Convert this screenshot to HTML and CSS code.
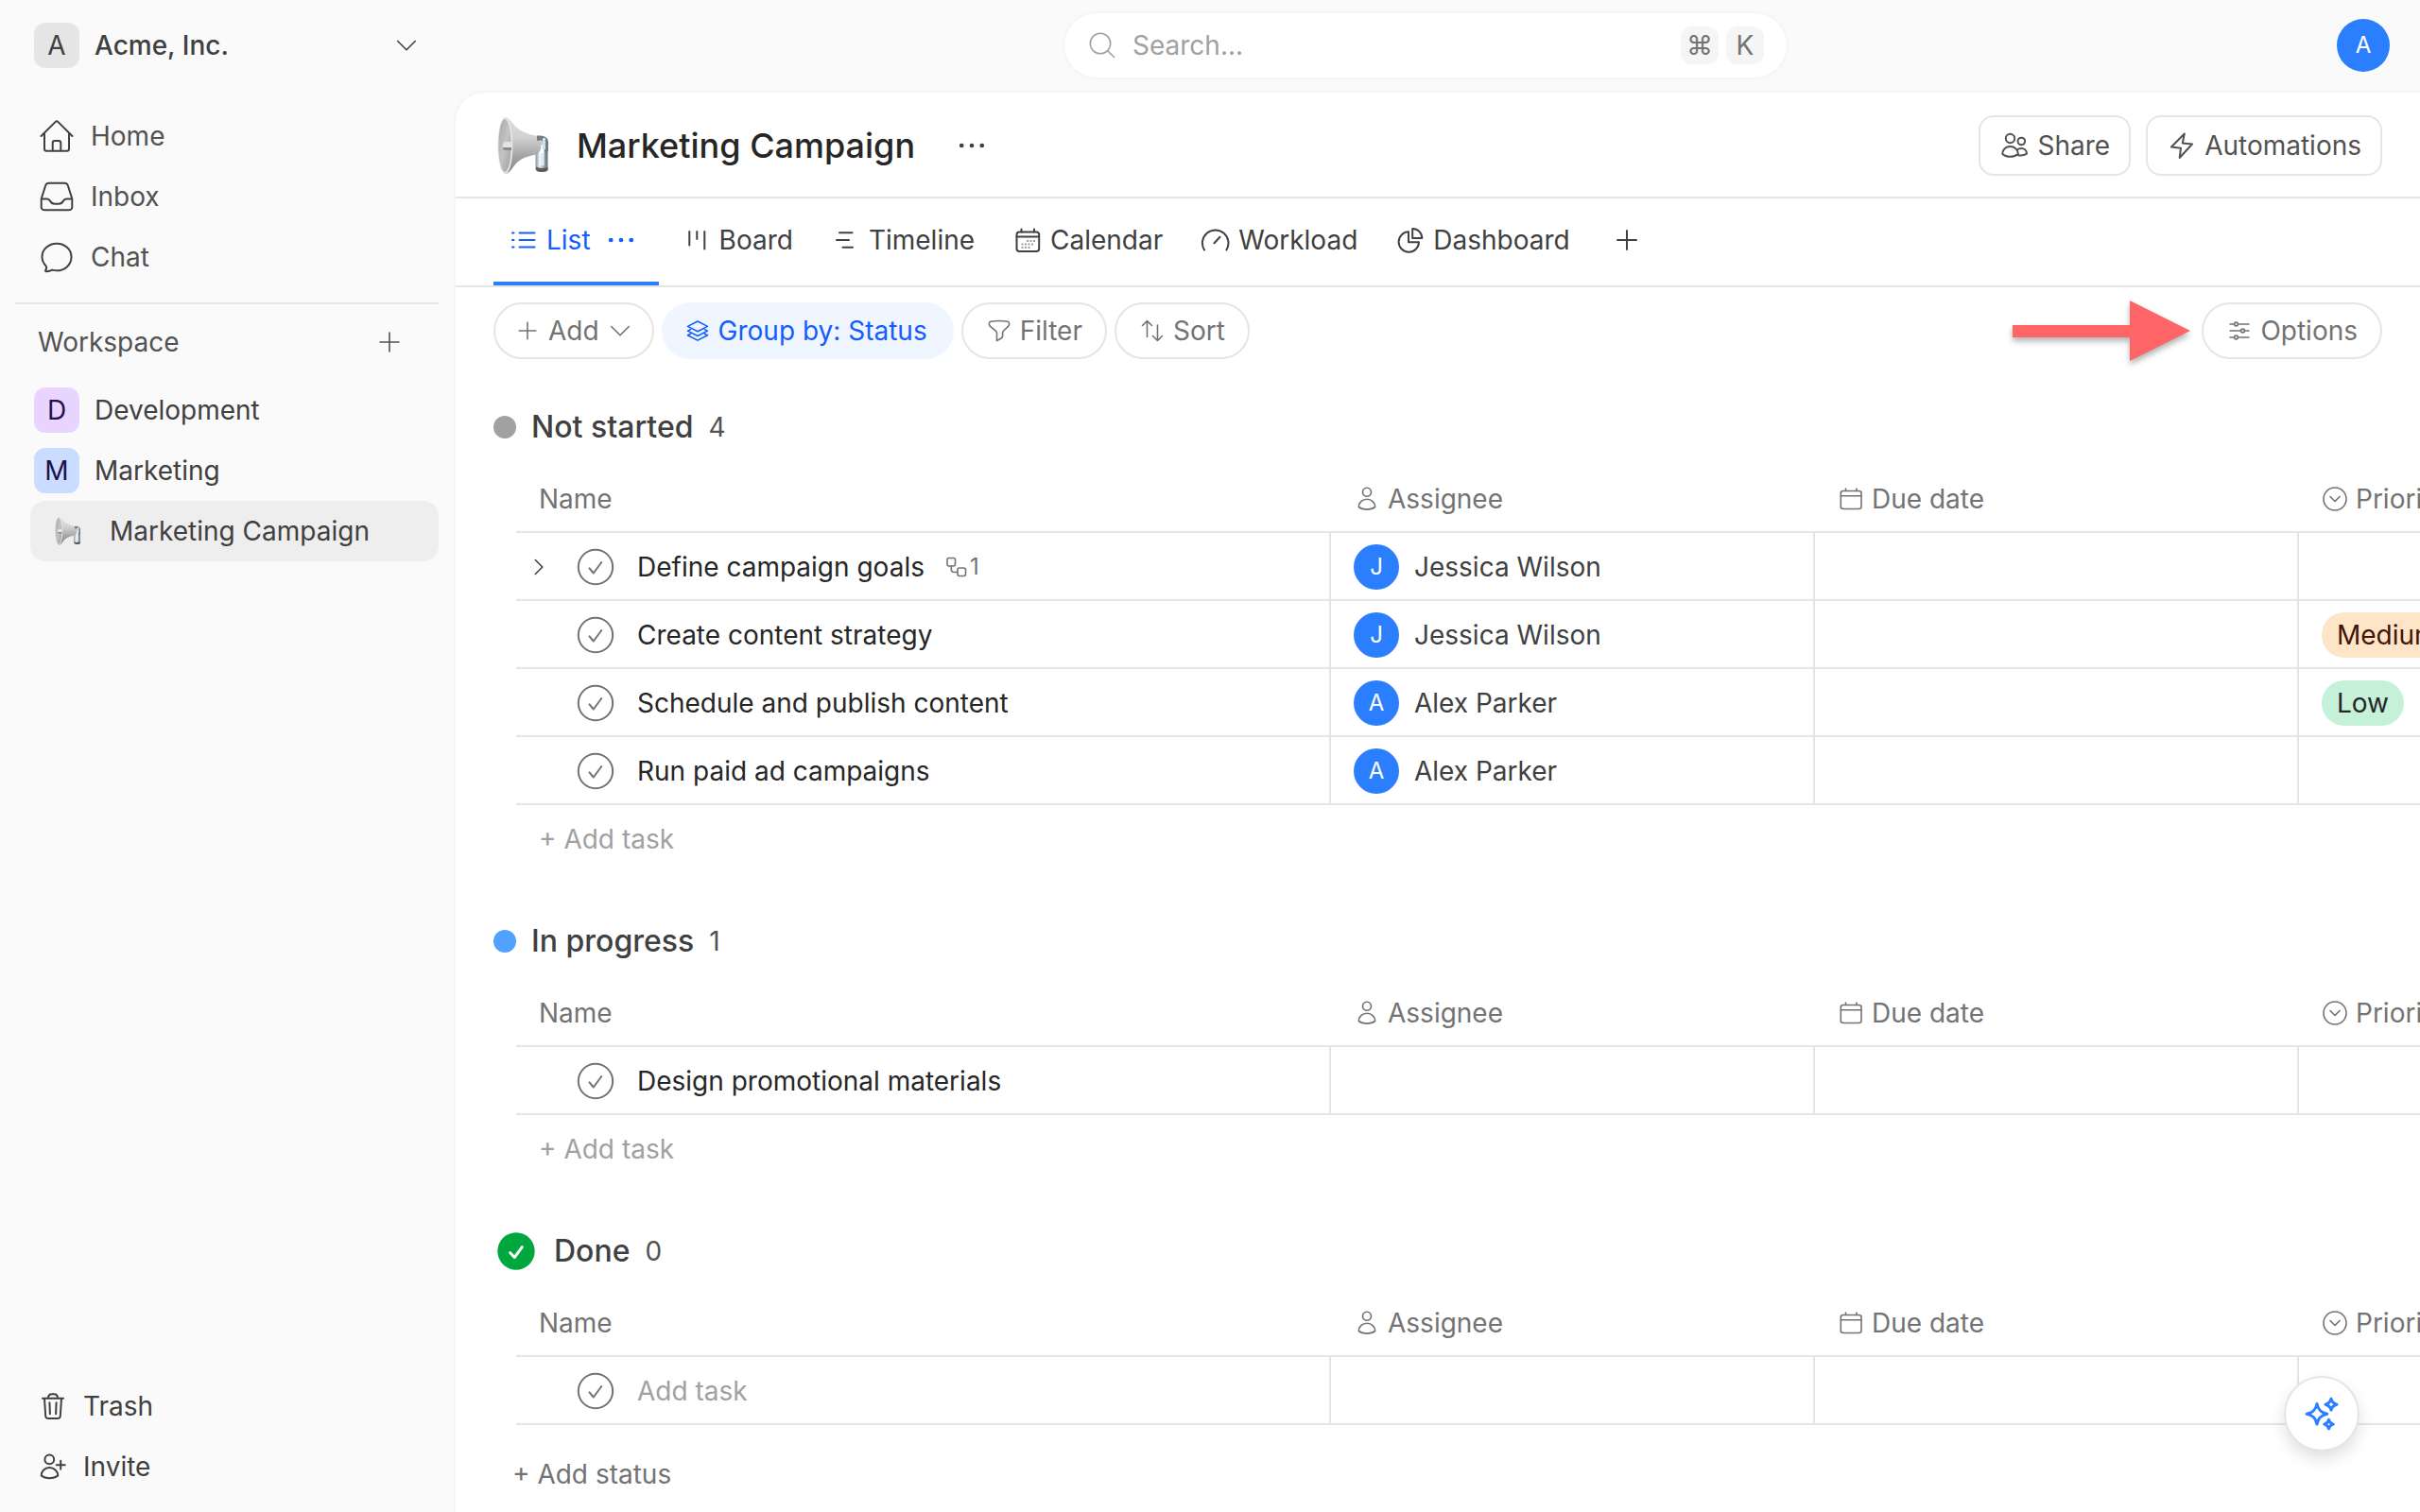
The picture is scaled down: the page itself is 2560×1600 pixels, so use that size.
FILE: index.html
```html
<!DOCTYPE html>
<html lang="en">
<head>
<meta charset="utf-8">
<meta name="viewport" content="width=device-width, initial-scale=1">
<title>Marketing Campaign – Acme, Inc.</title>
<link rel="stylesheet" href="styles.css">
</head>
<body>
<svg class="sprite" aria-hidden="true">
  <defs>
    <linearGradient id="horn" x1="0" y1="0" x2="0" y2="1">
      <stop offset="0" stop-color="#dcdcdc"/><stop offset=".35" stop-color="#d2d2d2"/><stop offset=".7" stop-color="#a2a2a2"/><stop offset="1" stop-color="#8a8a8a"/>
    </linearGradient>
    <linearGradient id="bell" x1="0" y1="0" x2="1" y2="1">
      <stop offset="0" stop-color="#a8a8a8"/><stop offset=".5" stop-color="#c4c4c4"/><stop offset="1" stop-color="#9d9d9d"/>
    </linearGradient>
    <linearGradient id="grip" x1="0" y1="0" x2="1" y2="0">
      <stop offset="0" stop-color="#8d9299"/><stop offset=".35" stop-color="#e8f1f8"/><stop offset=".6" stop-color="#9cb8c8"/><stop offset="1" stop-color="#6c6c6c"/>
    </linearGradient>
  </defs>
  <symbol id="i-megaphone" viewBox="0 0 64 64">
    <path d="M46 27h11.500v30c0 2-2 3-6.500 3s-6.500-1.500-6.500-3.500V40h4v13h5V31h-8z" fill="url(#grip)"/>
    <path d="M45 54.500c2 1.500 8 2 12.500.5v2.500c0 1.500-2.500 2.500-6.500 2.500s-6-1.300-6-3z" fill="#5c5c5c"/>
    <path d="M49.500 40h3.500v13.500h-3.500z" fill="#dcecf6"/>
    <path d="M12 2c4 0 7 5 11 9.500 6 6 14 8.500 22 10 4 .8 5.500 4 5.500 9.500s-2 9.500-6 10.500c-8 2-14 3-20.500 9.500C20 55.500 17 62 12 62z" fill="url(#horn)"/>
    <path d="M46 21.500c8-.5 12 2 12 7v9c0 1.500-2.500 1.500-4 .5V29c-2-3-5-3-8-2z" fill="#767b80"/>
    <path d="M52 24h3v12h-3z" fill="#c9e2f0"/>
    <ellipse cx="12.500" cy="32" rx="8" ry="30" fill="#e4e4e4"/>
    <ellipse cx="12" cy="32" rx="6.600" ry="28" fill="url(#bell)"/>
    <path d="M12 28h7v8h-7c-3-1-3-7 0-8z" fill="#e3e3e3"/>
    <path d="M12 34h7v3h-7c-1.500-.5-2-1.500-2-3z" fill="#8a8a8a"/>
  </symbol>
  <symbol id="i-home" viewBox="0 0 40 40"><path d="M3.500 20 18.700 4.900a1.800 1.800 0 0 1 2.600 0L36.500 20M7 17v16.500a2.200 2.200 0 0 0 2.200 2.200h21.600a2.200 2.200 0 0 0 2.200-2.200V17M15.700 35.500v-8.200a2.300 2.300 0 0 1 2.300-2.300h4a2.300 2.300 0 0 1 2.300 2.300v8.200"/></symbol>
  <symbol id="i-inbox" viewBox="0 0 40 40"><path d="M3.700 22.500 8 8.700a4 4 0 0 1 3.800-2.900h16.400A4 4 0 0 1 32 8.700l4.300 13.800V31a3.300 3.300 0 0 1-3.300 3.300H7A3.300 3.300 0 0 1 3.700 31zM3.700 22.500h6.100c1.600 0 2.600.8 3.300 2.200 1 2 2.700 3 4.900 3h4c2.200 0 3.900-1 4.900-3 .7-1.400 1.700-2.200 3.300-2.200h6.100"/></symbol>
  <symbol id="i-chat" viewBox="0 0 40 40"><path d="M20 5.700c8.700 0 15.500 6.300 15.500 14.300S28.700 34.300 20 34.300c-1.700 0-3.200-.2-4.700-.7-1.700 1-4 1.700-6.300 1.600-.9 0-1.200-.7-.7-1.400 1.100-1.600 1.100-3.300.2-4.600A13.700 13.700 0 0 1 4.500 20c0-8 6.800-14.300 15.500-14.300Z"/></symbol>
  <symbol id="i-trash" viewBox="0 0 32 32"><path d="M5 7.800h22M7 7.800l1.200 18.400a3 3 0 0 0 3 2.800h9.600a3 3 0 0 0 3-2.800L25 7.800M10.800 7.800c.3-2.700 1.800-4.600 4-4.600h2.400c2.200 0 3.700 1.900 4 4.600M12.400 12.300l.5 12M19.600 12.300l-.5 12"/></symbol>
  <symbol id="i-invite" viewBox="0 0 32 32"><circle cx="12.300" cy="8.300" r="4.900"/><path d="M3.700 25.500c0-4.600 3.800-8.500 8.600-8.500s9 3.900 9 8.500c-4.500 3.600-13.200 3.600-17.600 0ZM24.200 9.700v9M19.700 14.200h9"/></symbol>
  <symbol id="i-plus" viewBox="0 0 28 28"><path d="M14 4v20M4 14h20"/></symbol>
  <symbol id="i-plus-small" viewBox="0 0 28 28"><path d="M14 5.200v17.600M5.200 14h17.600"/></symbol>
  <symbol id="i-down" viewBox="0 0 28 28"><path d="m4.700 9.500 9.300 9.300 9.300-9.300"/></symbol>
  <symbol id="i-right" viewBox="0 0 28 28"><path d="m10.300 6.500 7.500 7.500-7.500 7.500"/></symbol>
  <symbol id="i-search" viewBox="0 0 32 32"><circle cx="14" cy="14" r="10.700"/><path d="m21.700 21.700 6.800 6.800"/></symbol>
  <symbol id="i-dots" viewBox="0 0 32 32"><g fill="currentColor" stroke="none"><circle cx="3.700" cy="16" r="2.700"/><circle cx="16" cy="16" r="2.700"/><circle cx="28.300" cy="16" r="2.700"/></g></symbol>
  <symbol id="i-share" viewBox="0 0 28 28"><circle cx="9.500" cy="6.500" r="4.700"/><circle cx="21.300" cy="9.500" r="3.800"/><path d="M1.200 22.700C1.200 18.300 5 15 9.500 15s8.400 3.300 8.400 7.700c-4.200 4.100-12.500 4.100-16.700 0ZM17.900 24.200c3 .5 6.400.2 9.100-1.500 0-3.600-2.600-5.800-5.700-5.800-2 0-3.400.6-4.400 1.700"/></symbol>
  <symbol id="i-bolt" viewBox="0 0 28 28"><path d="M16.800 1.500 3 15.500l10 1.300L11.700 27 25 12.500l-10.200-1z"/></symbol>
  <symbol id="i-list" viewBox="0 0 32 32"><path d="M11.500 8.500h16M11.500 16h16M11.500 23.500h16M4 8.500h1.500M4 16h1.500M4 23.500h1.500"/></symbol>
  <symbol id="i-board" viewBox="0 0 32 32"><path d="M8.300 7v14.500M16.300 7v8M24.300 7v18.500"/></symbol>
  <symbol id="i-timeline" viewBox="0 0 32 32"><path d="M9 8.300h13.500M6 16h13M12.500 23.700h10.500"/></symbol>
  <symbol id="i-calendar" viewBox="0 0 32 32"><rect x="4.500" y="7.500" width="23.700" height="20.500" rx="3"/><path d="M4.500 12.500h23.700M9.500 4.500v3M23 4.500v3"/><g opacity=".5" stroke-linecap="butt" stroke-dasharray="2 1.500"><path d="M15 17h9M9.500 20.500h13.500M9.500 24h10"/></g></symbol>
  <symbol id="i-gauge" viewBox="0 0 32 32"><path d="M4 26.500a13.800 13.800 0 1 1 23.400 0"/><path d="m14.500 19.300 6-6.500"/></symbol>
  <symbol id="i-pie" viewBox="0 0 32 32"><path d="M14 7.300A10.700 10.700 0 1 0 25 18.300H14Z"/><path d="M18.200 4A10 10 0 0 1 28.300 14H18.200Z"/></symbol>
  <symbol id="i-layers" viewBox="0 0 28 28"><path d="M14 4 24.500 9.400 14 14.800 3.500 9.400ZM6.500 12.600l-3 1.500L14 19.500l10.500-5.400-3-1.500M6.500 17.200l-3 1.500L14 24.100l10.500-5.400-3-1.500"/></symbol>
  <symbol id="i-filter" viewBox="0 0 28 28"><path d="M14 3.500c3.300 0 6.300.3 9 .7 1 .2 1.600 1 1.600 2V7c0 .8-.3 1.500-.9 2.100l-5.200 5.200a3 3 0 0 0-.9 2.100v3a3 3 0 0 1-1.500 2.600l-4.600 2.500v-8.100a3 3 0 0 0-.9-2.100L4.300 9.100A3 3 0 0 1 3.400 7v-.8c0-1 .6-1.800 1.600-2 2.700-.4 5.700-.7 9-.7Z"/></symbol>
  <symbol id="i-sort" viewBox="0 0 28 28"><path d="M8.500 20.500v-17M3.500 8.500l5-5 5 5M19.500 8v16.500M14.500 19.500l5 5 5-5"/></symbol>
  <symbol id="i-options" viewBox="0 0 28 28"><path d="M4 7h4.500M12.500 7H24M4 14h11.500M19.500 14H24M4 21h4.500M12.500 21H24"/><circle cx="10.500" cy="7" r="1.900"/><circle cx="17.500" cy="14" r="1.900"/><circle cx="10.500" cy="21" r="1.900"/></symbol>
  <symbol id="i-person" viewBox="0 0 28 28"><circle cx="14" cy="6.800" r="4.500"/><path d="M5.300 22.500c0-4.600 3.900-8.300 8.700-8.300s8.700 3.700 8.700 8.300c-4.400 3.500-13 3.500-17.400 0Z"/></symbol>
  <symbol id="i-date" viewBox="0 0 28 28"><rect x="3.300" y="5.500" width="21.700" height="19" rx="2.500"/><path d="M3.300 10.800H25M8.500 3v2.500M20 3v2.500"/></symbol>
  <symbol id="i-select" viewBox="0 0 28 28"><circle cx="14" cy="14" r="12"/><path d="m9 11.500 5 5 5-5"/></symbol>
  <symbol id="i-subtask" viewBox="0 0 28 28"><rect x="4" y="4.500" width="8.500" height="8.500" rx="2"/><rect x="15" y="15" width="8.500" height="8.500" rx="2"/><path d="M8.300 13v3.500a3 3 0 0 0 3 3H15"/></symbol>
  <symbol id="i-check" viewBox="0 0 40 40"><circle cx="20" cy="20" r="18.200"/><path d="m13.500 21.300 4.300 5.200 8.500-11.500"/></symbol>
  <symbol id="i-done" viewBox="0 0 48 48"><circle cx="24" cy="24" r="19.700" fill="#00a63e" stroke="none"/><path d="m17.700 25.700 4.600 4.800 8-10.800" fill="none" stroke="#fff" stroke-width="3"/></symbol>
  <symbol id="i-sparkles" viewBox="0 0 40 40"><path d="M15 9.500c1.300 6.600 4.200 9.500 10.800 10.800C19.200 21.600 16.300 24.500 15 31.100 13.700 24.500 10.800 21.600 4.200 20.300 10.800 19 13.700 16.100 15 9.500ZM30 4.200c.8 3.500 2.500 5.200 6 6-3.500.8-5.200 2.500-6 6-.8-3.500-2.500-5.200-6-6 3.500-.8 5.200-2.500 6-6ZM27.500 26.300c.6 2.800 2 4.200 4.800 4.800-2.800.6-4.200 2-4.800 4.800-.6-2.800-2-4.200-4.800-4.800 2.800-.6 4.200-2 4.800-4.800Z"/></symbol>
</svg>

<div class="app">
  <aside class="sidebar">
    <button class="org" type="button">
      <span class="badge badge-org">A</span>
      <span class="org-name">Acme, Inc.</span>
      <svg class="icon icon-28 thin"><use href="#i-down"/></svg>
    </button>
    <nav class="nav" aria-label="Main">
      <a class="nav-link" href="#home"><svg class="icon icon-40"><use href="#i-home"/></svg>Home</a>
      <a class="nav-link" href="#inbox"><svg class="icon icon-40"><use href="#i-inbox"/></svg>Inbox</a>
      <a class="nav-link" href="#chat"><svg class="icon icon-40"><use href="#i-chat"/></svg>Chat</a>
    </nav>
    <div class="workspace-head">
      <span>Workspace</span>
      <button class="icon-button" type="button" aria-label="Add to workspace"><svg class="icon icon-28 thin"><use href="#i-plus"/></svg></button>
    </div>
    <nav class="spaces" aria-label="Workspace">
      <a class="space" href="#development"><span class="badge badge-purple">D</span>Development</a>
      <a class="space" href="#marketing"><span class="badge badge-blue">M</span>Marketing</a>
      <a class="project" href="#campaign" aria-current="page"><svg class="icon-32"><use href="#i-megaphone"/></svg>Marketing Campaign</a>
    </nav>
    <nav class="sidebar-foot" aria-label="Tools">
      <a class="nav-link dark" href="#trash"><svg class="icon icon-32"><use href="#i-trash"/></svg>Trash</a>
      <a class="nav-link dark" href="#invite"><svg class="icon icon-32"><use href="#i-invite"/></svg>Invite</a>
    </nav>
  </aside>

  <div class="content">
    <header class="topbar">
      <div class="search-slot">
        <label class="search">
          <svg class="icon icon-32 thin"><use href="#i-search"/></svg>
          <input class="search-input" type="search" placeholder="Search..." aria-label="Search">
          <span class="keys"><kbd>⌘</kbd><kbd>K</kbd></span>
        </label>
      </div>
      <button class="account" type="button" aria-label="Account">A</button>
    </header>

    <main class="panel">
      <div class="project-head">
        <svg class="icon-64"><use href="#i-megaphone"/></svg>
        <h1>Marketing Campaign</h1>
        <button class="icon-button more" type="button" aria-label="More"><svg class="icon icon-28"><use href="#i-dots"/></svg></button>
        <div class="head-actions">
          <button class="action" type="button"><svg class="icon icon-28"><use href="#i-share"/></svg>Share</button>
          <button class="action" type="button"><svg class="icon icon-28"><use href="#i-bolt"/></svg>Automations</button>
        </div>
      </div>

      <nav class="tabs" aria-label="Views">
        <a class="tab active" href="#list" aria-current="page"><svg class="icon icon-32"><use href="#i-list"/></svg>List<span class="tab-more"><svg class="icon icon-28"><use href="#i-dots"/></svg></span></a>
        <a class="tab" href="#board"><svg class="icon icon-32"><use href="#i-board"/></svg>Board</a>
        <a class="tab" href="#timeline"><svg class="icon icon-32"><use href="#i-timeline"/></svg>Timeline</a>
        <a class="tab" href="#calendar"><svg class="icon icon-32"><use href="#i-calendar"/></svg>Calendar</a>
        <a class="tab" href="#workload"><svg class="icon icon-32"><use href="#i-gauge"/></svg>Workload</a>
        <a class="tab" href="#dashboard"><svg class="icon icon-32"><use href="#i-pie"/></svg>Dashboard</a>
        <button class="tab tab-add" type="button" aria-label="Add view"><svg class="icon icon-28"><use href="#i-plus"/></svg></button>
      </nav>

      <div class="toolbar">
        <button class="pill pill-add" type="button"><svg class="icon icon-28 thin"><use href="#i-plus-small"/></svg>Add<svg class="icon icon-28 thin"><use href="#i-down"/></svg></button>
        <button class="pill pill-on" type="button"><svg class="icon icon-28 thin"><use href="#i-layers"/></svg>Group by: Status</button>
        <button class="pill" type="button"><svg class="icon icon-28 thin"><use href="#i-filter"/></svg>Filter</button>
        <button class="pill" type="button"><svg class="icon icon-28 thin"><use href="#i-sort"/></svg>Sort</button>
        <svg class="pointer" viewBox="0 0 188 64" aria-hidden="true"><path d="M0 26h124V0l64 32-64 32V39H0z" fill="#ff6467"/></svg>
        <button class="pill" type="button"><svg class="icon icon-28 thin"><use href="#i-options"/></svg>Options</button>
      </div>

      <div class="groups">
        <section class="group">
          <h2 class="group-title"><span class="dot dot-gray"></span>Not started<span class="count">4</span></h2>
          <table class="tasks">
            <colgroup><col class="col-name"><col class="col"><col class="col"><col class="col"></colgroup>
            <thead>
              <tr>
                <th scope="col">Name</th>
                <th scope="col"><span class="th"><svg class="icon icon-28 thin"><use href="#i-person"/></svg>Assignee</span></th>
                <th scope="col"><span class="th"><svg class="icon icon-28 thin"><use href="#i-date"/></svg>Due date</span></th>
                <th scope="col"><span class="th"><svg class="icon icon-28 thin"><use href="#i-select"/></svg>Priority</span></th>
              </tr>
            </thead>
            <tbody>
              <tr>
                <td class="name-cell"><div class="task"><button class="expand" type="button" aria-label="Expand"><svg class="icon icon-28 thin"><use href="#i-right"/></svg></button><button class="check" type="button" aria-label="Complete"><svg class="icon icon-40 check-icon"><use href="#i-check"/></svg></button><span>Define campaign goals</span><span class="subtasks"><svg class="icon icon-28 thin"><use href="#i-subtask"/></svg>1</span></div></td>
                <td><div class="person"><span class="avatar">J</span>Jessica Wilson</div></td><td></td><td></td>
              </tr>
              <tr>
                <td class="name-cell"><div class="task"><span class="expand"></span><button class="check" type="button" aria-label="Complete"><svg class="icon icon-40 check-icon"><use href="#i-check"/></svg></button><span>Create content strategy</span></div></td>
                <td><div class="person"><span class="avatar">J</span>Jessica Wilson</div></td><td></td><td><span class="tag tag-medium">Medium</span></td>
              </tr>
              <tr>
                <td class="name-cell"><div class="task"><span class="expand"></span><button class="check" type="button" aria-label="Complete"><svg class="icon icon-40 check-icon"><use href="#i-check"/></svg></button><span>Schedule and publish content</span></div></td>
                <td><div class="person"><span class="avatar">A</span>Alex Parker</div></td><td></td><td><span class="tag tag-low">Low</span></td>
              </tr>
              <tr>
                <td class="name-cell"><div class="task"><span class="expand"></span><button class="check" type="button" aria-label="Complete"><svg class="icon icon-40 check-icon"><use href="#i-check"/></svg></button><span>Run paid ad campaigns</span></div></td>
                <td><div class="person"><span class="avatar">A</span>Alex Parker</div></td><td></td><td></td>
              </tr>
            </tbody>
          </table>
          <button class="add-task" type="button">+ Add task</button>
        </section>

        <section class="group">
          <h2 class="group-title"><span class="dot dot-blue"></span>In progress<span class="count">1</span></h2>
          <table class="tasks">
            <colgroup><col class="col-name"><col class="col"><col class="col"><col class="col"></colgroup>
            <thead>
              <tr>
                <th scope="col">Name</th>
                <th scope="col"><span class="th"><svg class="icon icon-28 thin"><use href="#i-person"/></svg>Assignee</span></th>
                <th scope="col"><span class="th"><svg class="icon icon-28 thin"><use href="#i-date"/></svg>Due date</span></th>
                <th scope="col"><span class="th"><svg class="icon icon-28 thin"><use href="#i-select"/></svg>Priority</span></th>
              </tr>
            </thead>
            <tbody>
              <tr>
                <td class="name-cell"><div class="task"><span class="expand"></span><button class="check" type="button" aria-label="Complete"><svg class="icon icon-40 check-icon"><use href="#i-check"/></svg></button><span>Design promotional materials</span></div></td>
                <td></td><td></td><td></td>
              </tr>
            </tbody>
          </table>
          <button class="add-task" type="button">+ Add task</button>
        </section>

        <section class="group">
          <h2 class="group-title"><svg class="icon icon-48"><use href="#i-done"/></svg>Done<span class="count">0</span></h2>
          <table class="tasks">
            <colgroup><col class="col-name"><col class="col"><col class="col"><col class="col"></colgroup>
            <thead>
              <tr>
                <th scope="col">Name</th>
                <th scope="col"><span class="th"><svg class="icon icon-28 thin"><use href="#i-person"/></svg>Assignee</span></th>
                <th scope="col"><span class="th"><svg class="icon icon-28 thin"><use href="#i-date"/></svg>Due date</span></th>
                <th scope="col"><span class="th"><svg class="icon icon-28 thin"><use href="#i-select"/></svg>Priority</span></th>
              </tr>
            </thead>
            <tbody>
              <tr>
                <td class="name-cell"><div class="task"><span class="expand"></span><button class="check" type="button" aria-label="Complete"><svg class="icon icon-40 check-icon"><use href="#i-check"/></svg></button><input class="task-input" type="text" placeholder="Add task" aria-label="Add task"></div></td>
                <td></td><td></td><td></td>
              </tr>
            </tbody>
          </table>
        </section>
        <button class="add-status" type="button">+ Add status</button>
      </div>
    </main>
  </div>
</div>
<button class="assistant" type="button" aria-label="Assistant"><svg class="icon icon-40"><use href="#i-sparkles"/></svg></button>
</body>
</html>
```
FILE: styles.css
```css
* { box-sizing: border-box; }

body {
  margin: 0;
  background: #fafafa;
  color: #404040;
  font-family: Inter, "Liberation Sans", sans-serif;
  font-size: 28px;
  line-height: 40px;
}

a { color: inherit; text-decoration: none; }

button {
  margin: 0;
  padding: 0;
  border: 0;
  background: none;
  color: inherit;
  font: inherit;
  cursor: pointer;
}

input {
  min-width: 0;
  padding: 0;
  border: 0;
  outline: 0;
  background: none;
  color: inherit;
  font: inherit;
}

input::placeholder { color: #a1a1a1; opacity: 1; }

.sprite { position: absolute; width: 0; height: 0; }

.icon {
  flex: none;
  fill: none;
  stroke: currentColor;
  stroke-width: 2;
  stroke-linecap: round;
  stroke-linejoin: round;
}

.thin { stroke-width: 1.6; }
.icon-28 { width: 28px; height: 28px; }
.icon-32 { width: 32px; height: 32px; }
.icon-40 { width: 40px; height: 40px; }
.icon-48 { width: 48px; height: 48px; }
.icon-64 { width: 64px; height: 64px; }

.app {
  display: grid;
  grid-template-columns: 480px minmax(0, 1fr);
  height: 100vh;
}

/* Sidebar */

.sidebar {
  display: flex;
  flex-direction: column;
  padding: 16px;
}

.org {
  display: flex;
  align-items: center;
  gap: 16px;
  height: 64px;
  padding: 0 20px;
  text-align: left;
}

.org-name { flex: 1; font-weight: 500; }

.badge {
  display: grid;
  place-items: center;
  width: 48px;
  height: 48px;
  border-radius: 12px;
}

.badge-org { background: #e5e5e5; }
.badge-purple { background: #e9d4ff; color: #1c1050; }
.badge-blue { background: #cadcff; color: #1c1050; }

.nav {
  padding: 32px 0 16px;
  border-bottom: 2px solid #e5e5e5;
}

.nav-link {
  display: flex;
  align-items: center;
  gap: 16px;
  height: 64px;
  padding: 0 24px;
  color: #525252;
}

.nav-link .icon { color: #404040; }
.dark { color: #404040; }

.workspace-head {
  display: flex;
  align-items: center;
  justify-content: space-between;
  height: 80px;
  padding: 0 32px 0 24px;
  color: #525252;
}

.icon-button {
  display: grid;
  place-items: center;
  width: 40px;
  height: 40px;
}

.space,
.project {
  display: flex;
  align-items: center;
  gap: 16px;
  height: 64px;
  padding: 0 20px;
}

.project {
  gap: 28px;
  margin-left: 16px;
  padding: 0 24px;
  border-radius: 16px;
  background: #eeeeee;
}

.sidebar-foot { margin-top: auto; }

/* Top bar */

.content {
  display: flex;
  flex-direction: column;
  min-width: 0;
}

.topbar {
  display: flex;
  align-items: center;
  height: 96px;
  padding: 0 32px 0 64px;
}

.search-slot {
  display: flex;
  flex: 1;
  justify-content: center;
}

.search {
  display: flex;
  align-items: center;
  gap: 16px;
  width: 768px;
  height: 72px;
  padding: 0 24px;
  border: 2px solid #f5f5f5;
  border-radius: 36px;
  background: #fff;
  color: #a1a1a1;
}

.search-input { flex: 1; }
.keys { display: flex; gap: 8px; }

kbd {
  display: grid;
  place-items: center;
  width: 40px;
  height: 40px;
  border-radius: 12px;
  background: #f5f5f5;
  color: #737373;
  font: inherit;
}

.account {
  width: 56px;
  height: 56px;
  border-radius: 50%;
  background: #2b7fff;
  color: #fff;
  font-size: 24px;
}

/* Project panel */

.panel {
  flex: 1;
  min-height: 0;
  overflow: hidden;
  border-top: 2px solid #f5f5f5;
  border-left: 2px solid #f5f5f5;
  border-top-left-radius: 32px;
  background: #fff;
}

.project-head {
  display: flex;
  align-items: center;
  height: 112px;
  padding: 2px 40px 0;
  border-bottom: 2px solid #e5e5e5;
}

h1 {
  margin: 0 0 0 24px;
  color: #262626;
  font-size: 36px;
  font-weight: 500;
}

.more { margin-left: 40px; }

.head-actions {
  display: flex;
  gap: 16px;
  margin-left: auto;
}

.action {
  display: flex;
  align-items: center;
  gap: 10px;
  height: 64px;
  padding: 0 20px 0 22px;
  border: 2px solid #e5e5e5;
  border-radius: 16px;
  color: #525252;
}

.tabs {
  display: flex;
  gap: 8px;
  height: 94px;
  padding: 0 40px;
  border-bottom: 2px solid #e5e5e5;
}

.tab {
  display: flex;
  align-items: center;
  gap: 8px;
  padding: 0 16px;
  border-bottom: 4px solid transparent;
}

.tab.active { border-bottom-color: #2b7fff; color: #155dfc; }

.tab-more {
  display: grid;
  place-items: center;
  width: 48px;
}

.tab-add { padding: 0 22px; }

.toolbar {
  display: flex;
  align-items: center;
  gap: 8px;
  padding: 16px 40px;
}

.pill {
  display: flex;
  align-items: center;
  gap: 8px;
  height: 60px;
  padding: 0 24px;
  border: 2px solid #e5e5e5;
  border-radius: 30px;
  color: #737373;
}

.pill-add { padding: 0 20px; }

.pill-on {
  padding: 0 28px 0 24px;
  border: 0;
  background: #eff6ff;
  color: #155dfc;
}

.pointer {
  width: 188px;
  height: 64px;
  margin: -2px 4px -2px auto;
  filter: drop-shadow(0 4px 3px rgba(0, 0, 0, 0.3));
  overflow: visible;
}

/* Task groups */

.groups { padding: 32px 0 0 40px; }
.group + .group { margin-top: 48px; }

.group-title {
  display: flex;
  align-items: center;
  gap: 16px;
  height: 48px;
  margin: 0 0 16px;
  font-size: 32px;
  font-weight: 500;
  line-height: 42px;
}

.dot {
  width: 24px;
  height: 24px;
  border-radius: 50%;
}

.dot-gray { background: #a1a1a1; }
.dot-blue { background: #51a2ff; }

.count {
  color: #525252;
  font-size: 28px;
  font-weight: 400;
}

.tasks {
  width: 2398px;
  margin-left: 24px;
  border-collapse: separate;
  border-spacing: 0;
  table-layout: fixed;
}

.col-name { width: 862px; }
.col { width: 512px; }

th,
td {
  height: 72px;
  padding: 2px 24px 0;
  border-bottom: 2px solid #e5e5e5;
  text-align: left;
}

th { color: #737373; font-weight: 400; }
td { border-right: 2px solid #e5e5e5; }

.th {
  display: flex;
  align-items: center;
  gap: 8px;
}

.name-cell { padding: 2px 10px 0; color: #262626; }

.task {
  display: flex;
  align-items: center;
}

.expand {
  display: grid;
  place-items: center;
  width: 28px;
  height: 28px;
  margin-right: 26px;
  color: #404040;
}

.check {
  width: 40px;
  height: 40px;
  margin-right: 24px;
  color: #737373;
}

.check-icon { display: block; }
.task-input { flex: 1; }

.subtasks {
  display: flex;
  align-items: center;
  margin-left: 20px;
  color: #737373;
  font-size: 24px;
}

.person {
  display: flex;
  align-items: center;
  gap: 16px;
}

.avatar {
  display: grid;
  place-items: center;
  width: 48px;
  height: 48px;
  border-radius: 50%;
  background: #2b7fff;
  color: #fff;
  font-size: 24px;
}

.tag {
  display: block;
  width: fit-content;
  height: 48px;
  padding: 0 16px;
  border-radius: 24px;
  line-height: 48px;
}

.tag-medium { background: #ffe5c7; color: #441306; }
.tag-low { background: #c4f1d8; color: #262626; }

.add-task {
  display: block;
  height: 72px;
  padding: 0 48px;
  color: #a1a1a1;
}

.add-status {
  display: block;
  height: 72px;
  margin-top: 16px;
  padding: 0 20px;
  color: #737373;
}

/* Floating assistant button */

.assistant {
  position: fixed;
  right: 64px;
  bottom: 64px;
  display: grid;
  place-items: center;
  width: 80px;
  height: 80px;
  border: 2px solid #e5e5e5;
  border-radius: 50%;
  background: #fff;
  box-shadow: 0 8px 16px rgba(0, 0, 0, 0.12);
  color: #2b7fff;
}

.assistant .icon { stroke-width: 3; }
```
